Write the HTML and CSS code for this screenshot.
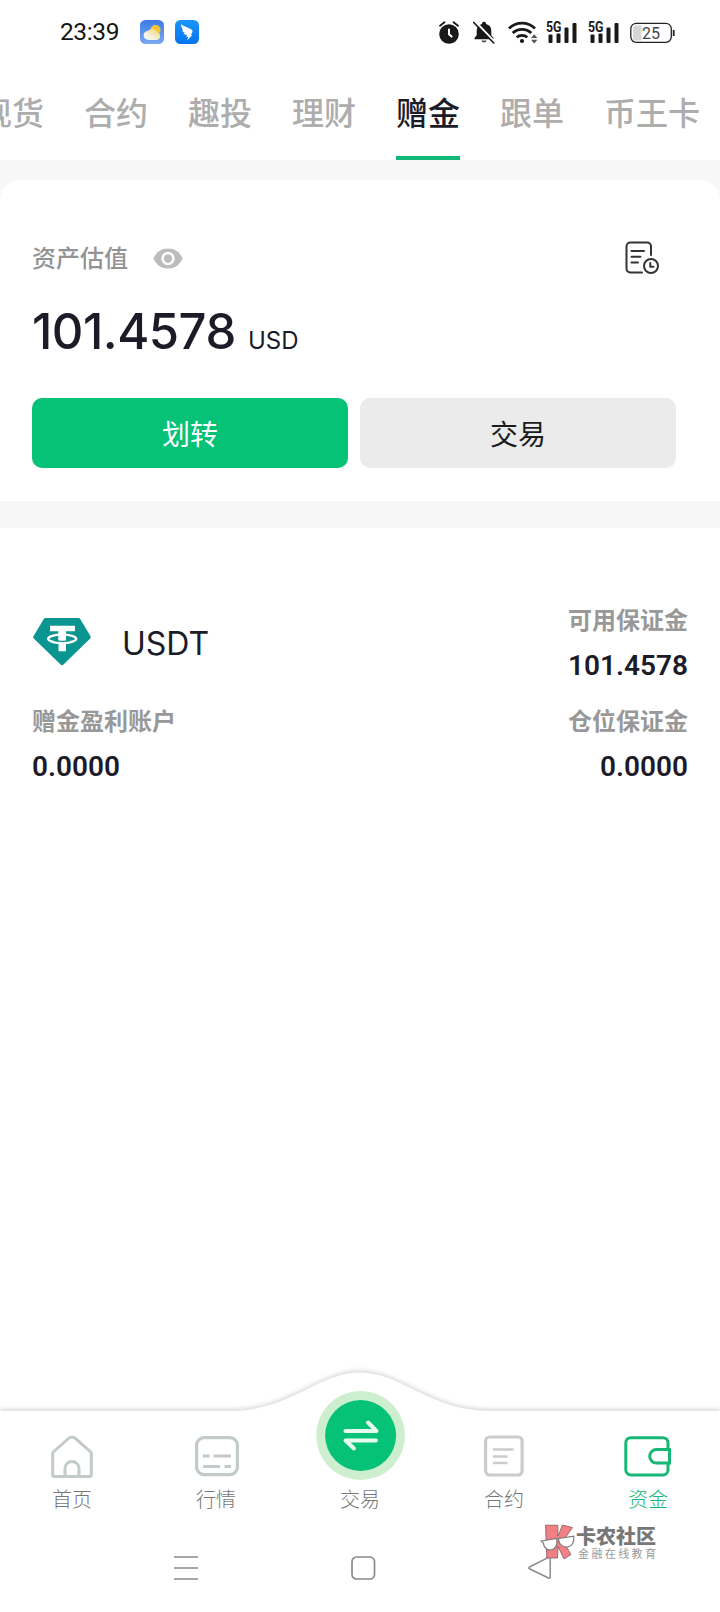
FILE: index.html
```html
<!DOCTYPE html>
<html lang="zh-CN">
<head>
<meta charset="utf-8">
<title>资金</title>
<link rel="stylesheet" href="styles.css">
</head>
<body>
<div class="screen">
  <header class="status">
    <span class="clock">23:39</span>
    <svg class="app-icon" viewBox="0 0 24 24">
      <defs><linearGradient id="sky" x1="0" y1="0" x2="0" y2="1"><stop offset="0" stop-color="#3d7be6"/><stop offset="1" stop-color="#7aa8f0"/></linearGradient>
      <linearGradient id="sun" x1="0" y1="1" x2="1" y2="0"><stop offset="0.3" stop-color="#f4f4ec"/><stop offset="1" stop-color="#f3d36a"/></linearGradient></defs>
      <rect width="24" height="24" rx="5.5" fill="url(#sky)"/>
      <circle cx="15.5" cy="10" r="5" fill="#fbc52d"/>
      <path d="M8.500 20a4.600 4.600 0 0 1-.6-9.200 6 6 0 0 1 9.600 1.500A4 4 0 0 1 17 20z" fill="url(#sun)"/>
    </svg>
    <svg class="app-icon second" viewBox="0 0 24 24">
      <defs><linearGradient id="blue" x1="0" y1="0" x2="0" y2="1"><stop offset="0" stop-color="#1b95f8"/><stop offset="1" stop-color="#0674ee"/></linearGradient></defs>
      <rect width="24" height="24" rx="5.500" fill="url(#blue)"/>
      <path d="M6 4.200c2.800 2.200 8 3.600 10.500 5.300 1.300 1 1.300 1.800.7 2.900l-1.400 2.600h1.600l-5.200 5.500 1-3.800h-2l.8-1.900c-2-.2-3-.9-3.500-1.900l1.800.1C8 11.900 7.200 10.900 7.100 9.700l1.500.5C6.900 8.500 5.900 6.600 6 4.200z" fill="#fff"/>
    </svg>
    <div class="status-right">
      <svg width="20" height="23" viewBox="0 0 20 23">
        <circle cx="10" cy="13" r="9.800" fill="#191919"/>
        <path d="M1 4.800 5.500 1.200M19 4.800 14.500 1.200" stroke="#191919" stroke-width="1.800" stroke-linecap="round"/>
        <path d="M10 8.500v4.800l2.600 2.300" fill="none" stroke="#fff" stroke-width="2" stroke-linecap="round"/>
      </svg>
      <svg class="bell" width="22" height="23" viewBox="0 0 22 23">
        <path d="M1.500 18.200v-1.300l2.200-2.700V9.500a7 7 0 0 1 5.200-6.600 2.100 2.100 0 0 1 4.200 0 7 7 0 0 1 5.200 6.600v4.700l2.200 2.700v1.300z" fill="#191919"/>
        <path d="M8.400 19.500h5.200a2.600 2 0 0 1-5.200 0z" fill="#555"/>
        <path d="M2.200.7 22 21.400" stroke="#fff" stroke-width="2.400"/>
        <path d="M.7 1.500 20.800 22" stroke="#191919" stroke-width="1.700" stroke-linecap="round"/>
      </svg>
      <svg class="wifi" width="30" height="23" viewBox="0 0 30 23">
        <g fill="none" stroke="#191919" stroke-width="2.700"><path d="M1 7.500a18.500 18.500 0 0 1 26 0"/><path d="M4.700 12a13.500 13.500 0 0 1 18.600 0"/><path d="M8.700 16.300a8 8 0 0 1 10.600 0"/></g>
        <circle cx="14" cy="20" r="2.100" fill="#191919"/>
        <path d="M23 17l3.200-3.800 3.200 3.800zM23 18.800l3.200 3.800 3.200-3.800z" fill="#555"/>
      </svg>
      <svg class="signal" width="32" height="23" viewBox="0 0 32 23">
        <text class="five-g" x="0" y="11" textLength="15.500" lengthAdjust="spacingAndGlyphs">5G</text>
        <g fill="#191919"><rect x="2.500" y="13.500" width="4" height="8.500" rx="1"/><rect x="10.500" y="12.500" width="4" height="9.500" rx="1"/><rect x="18.500" y="6.500" width="4" height="15.500" rx="1"/><rect x="26.500" y="2" width="4" height="20" rx="1"/></g>
      </svg>
      <svg class="signal" width="32" height="23" viewBox="0 0 32 23">
        <text class="five-g" x="0" y="11" textLength="15.500" lengthAdjust="spacingAndGlyphs">5G</text>
        <g fill="#191919"><rect x="2.500" y="13.500" width="4" height="8.500" rx="1"/><rect x="10.500" y="12.500" width="4" height="9.500" rx="1"/><rect x="18.500" y="6.500" width="4" height="15.500" rx="1"/><rect x="26.500" y="2" width="4" height="20" rx="1"/></g>
      </svg>
      <svg class="battery" width="45" height="23" viewBox="0 0 45 23">
        <rect x=".8" y="2.300" width="40.500" height="19" rx="5.500" fill="#fff" stroke="#222" stroke-width="1.300"/>
        <path d="M6 4.500h5.500v15H6a3 3 0 0 1-3-3v-9a3 3 0 0 1 3-3z" fill="#d6d6d6"/>
        <path d="M43.700 9v6" stroke="#222" stroke-width="1.800"/>
        <text class="charge" x="12" y="17.700" textLength="18" lengthAdjust="spacingAndGlyphs">25</text>
      </svg>
    </div>
  </header>

  <nav class="tabs">
    <a class="tab">现货</a><a class="tab">合约</a><a class="tab">趣投</a><a class="tab">理财</a><a class="tab active">赠金</a><a class="tab">跟单</a><a class="tab">币王卡</a>
  </nav>

  <main class="content">
    <section class="summary">
      <div class="summary-head">
        <span class="caption">资产估值</span>
        <svg class="eye" width="30" height="21" viewBox="0 0 30 21">
          <path d="M15 .5C23 .5 27.500 5.500 29.500 10.500 27.500 15.500 23 20.500 15 20.500S2.500 15.500.5 10.500C2.500 5.500 7 .5 15 .5z" fill="#bcbcbc"/>
          <circle cx="15" cy="10.500" r="5.400" fill="none" stroke="#fff" stroke-width="2.500"/>
        </svg>
        <svg class="history" width="35" height="34" viewBox="0 0 35 34">
          <g fill="none" stroke="#333" stroke-width="2" stroke-linecap="round" stroke-linejoin="round">
            <path d="M17 31.500H5.200A3.700 3.700 0 0 1 1.500 27.800V5.200A3.700 3.700 0 0 1 5.200 1.500h17.100A3.700 3.700 0 0 1 26 5.200V14"/>
            <path d="M6.500 10h12.500M6.500 15.700h9M6.500 21.400h6.500"/>
            <circle cx="26" cy="25" r="7"/>
            <path d="M25.300 22v3.800h3.200"/>
          </g>
        </svg>
      </div>
      <div class="total"><span class="amount">101.4578</span><span class="unit">USD</span></div>
      <div class="actions">
        <button class="btn primary">划转</button>
        <button class="btn">交易</button>
      </div>
    </section>

    <section class="asset">
      <div class="coin">
        <svg width="60" height="50" viewBox="0 0 60 50">
          <path d="M13.500 1h33a2 2 0 0 1 1.700 1L58.500 19.200a2 2 0 0 1-.3 2.400L31.500 47.500a2 2 0 0 1-2.900 0L1.800 21.600a2 2 0 0 1-.3-2.400L11.800 2a2 2 0 0 1 1.700-1z" fill="#0a9590"/>
          <path d="M18 8.800h25v5.500H34v20h-7.500v-20H18z" fill="#fff"/>
          <ellipse cx="30.200" cy="21.800" rx="14" ry="4.200" fill="none" stroke="#fff" stroke-width="2.400"/>
          <path d="M26.500 15h7.500v8h-7.500z" fill="#fff"/>
          <path d="M22 23.600q8 1.400 16.500 0" fill="none" stroke="#0a9590" stroke-width="1.300"/>
        </svg>
        <span class="coin-name">USDT</span>
      </div>
      <div class="cell right"><span class="label">可用保证金</span><span class="value">101.4578</span></div>
      <div class="cell"><span class="label">赠金盈利账户</span><span class="value">0.0000</span></div>
      <div class="cell right"><span class="label">仓位保证金</span><span class="value">0.0000</span></div>
    </section>
  </main>

  <footer class="bottom">
    <svg class="curve" width="720" height="252" viewBox="0 0 720 252">
      <path d="M-10 51H230C290 51 318 12.500 360 12.500S430 51 490 51H730V270H-10z" fill="#fff"/>
    </svg>
    <nav class="dock">
      <a class="dock-item">
        <svg width="48" height="48" viewBox="0 0 48 48"><g fill="none" stroke="#c3cbc6" stroke-width="3" stroke-linejoin="round"><path d="M4.700 20.500 20.500 6.500q3.500-3 7 0L43.300 20.500V42.500q0 2-2 2H6.700q-2 0-2-2z"/><path d="M17 44V36.500a7 7 0 0 1 14 0V44"/></g></svg>
        <span>首页</span>
      </a>
      <a class="dock-item">
        <svg width="48" height="48" viewBox="0 0 48 48"><g fill="none" stroke="#c3cbc6" stroke-width="3.200"><rect x="4.600" y="5.600" width="40.800" height="37" rx="7.500"/><path d="M11 24h6.500M21.500 24h17.500M11 34.500h17M32.500 34.500h6.500"/></g></svg>
        <span>行情</span>
      </a>
      <a class="dock-item center">
        <svg width="90" height="90" viewBox="0 0 90 90"><circle cx="45.600" cy="45.500" r="44.400" fill="#cdefcf"/><circle cx="45.600" cy="45.500" r="35.500" fill="#06c277"/><path d="M30.500 41H61.500L53 32.500M61 50.500H30.500L39 58.500" fill="none" stroke="#e8fbef" stroke-width="4" stroke-linecap="round" stroke-linejoin="round"/></svg>
        <span>交易</span>
      </a>
      <a class="dock-item">
        <svg width="48" height="48" viewBox="0 0 48 48"><g fill="none" stroke="#c9cdca" stroke-width="3.200"><rect x="5.600" y="5" width="36.500" height="38" rx="4"/><path d="M13 17.500h20.500M13 24.500h14.500M13 31h14.500" stroke-width="2.600"/></g></svg>
        <span>合约</span>
      </a>
      <a class="dock-item current">
        <svg width="48" height="48" viewBox="0 0 48 48"><g fill="none" stroke="#17b877" stroke-width="3"><path d="M44 18V10.700a5 5 0 0 0-5-5H6.800a5 5 0 0 0-5 5V38a5 5 0 0 0 5 5H39a5 5 0 0 0 5-5V31"/><path d="M45.500 17.500H32.500a6.800 6.800 0 0 0 0 13.600h13z"/></g></svg>
        <span>资金</span>
      </a>
    </nav>
    <div class="system">
      <svg width="26" height="26" viewBox="0 0 26 26"><path d="M1 2h24M1 13h24M1 24h24" stroke="#8b8b8b" stroke-width="1.700"/></svg>
      <svg width="26" height="26" viewBox="0 0 26 26"><rect x="2" y="2" width="22.500" height="22" rx="4.500" fill="none" stroke="#8b8b8b" stroke-width="1.700"/></svg>
      <svg width="26" height="26" viewBox="0 0 26 26"><path d="M2.500 12 21.500 2.400q1.700-.6 1.700 1V22q0 1.700-1.700 1L2.500 13.800q-1.300-.9 0-1.800z" fill="none" stroke="#8b8b8b" stroke-width="1.500"/></svg>
    </div>
    <div class="stamp">
      <svg width="35" height="36" viewBox="0 0 35 36">
        <g fill="#f07f86" stroke="#8a5a5c" stroke-width=".8"><path d="M5.500 1.200h12.300L18 12 22.500 1 32.500 3.600 23 17 31 30.500 24 35 18 22.500 17.500 34H6.800z"/></g>
        <g fill="#fff" stroke="#777" stroke-width="1.100"><path d="M1.200 17 16.600 14.500C18 22 14.500 26 10 26S3.500 22 3.500 19z"/><path d="M18.500 14.500 33.800 12.200C34.500 18 32 23 26.500 23S18.500 18.500 18.500 14.500z"/></g>
      </svg>
      <div class="stamp-text"><b class="stamp-title">卡农社区</b><span class="stamp-sub">金融在线教育</span></div>
    </div>
  </footer>
</div>
</body>
</html>
```
FILE: styles.css
```css
* { box-sizing: border-box; }
body {
  margin: 0;
  background: #fff;
  color: #1b1c28;
  font-family: "Noto Sans CJK SC", sans-serif;
}
svg { display: block; flex: none; }
.screen {
  width: 720px;
  height: 1612px;
  display: flex;
  flex-direction: column;
  overflow: hidden;
}

/* Status bar */
.status {
  height: 64px;
  display: flex;
  align-items: center;
  padding: 0 45px 0 60px;
}
.clock {
  width: 80px;
  font: 400 24.500px/66px Roboto, sans-serif;
  letter-spacing: -0.4px;
  color: #151515;
}
.app-icon { width: 24px; height: 24px; }
.app-icon.second { margin-left: 11px; }
.status-right { display: flex; margin-left: auto; align-items: center; }
.bell { margin-left: 14px; }
.wifi { margin-left: 13px; }
.signal { margin-left: 8px; }
.signal + .signal { margin-left: 10px; }
.battery { margin-left: 10px; }
.five-g { font: 700 14px Roboto, sans-serif; fill: #191919; }
.charge { font: 400 16px Roboto, sans-serif; fill: #444; }

/* Account tabs */
.tabs {
  height: 96px;
  display: flex;
  gap: 40px;
  margin-left: -20px;
}
.tab {
  flex: none;
  height: 96px;
  font-size: 32px;
  font-weight: 500;
  line-height: 94px;
  color: #adadad;
}
.tab.active { color: #1b1c28; border-bottom: 4px solid #13b977; }

/* Balance summary */
.content { flex: 1; min-height: 0; display: flex; flex-direction: column; background: #f7f7f7; padding-top: 20px; }
.summary {
  height: 321px;
  padding: 58px 44px 0 32px;
  background: #fff;
  border-radius: 20px 20px 0 0;
}
.summary-head { display: flex; align-items: center; height: 40px; }
.caption { height: 40px; font-size: 24px; font-weight: 500; line-height: 37px; color: #939393; width: 121px; }
.history { margin-left: auto; margin-right: 16px; }
.total {
  height: 120px;
  display: flex;
  align-items: baseline;
  font-family: Inter, sans-serif;
  line-height: 107px;
}
.amount { font-size: 49px; font-weight: 500; width: 216px; letter-spacing: -0.5px; }
.unit { font-size: 24px; }
.actions { display: flex; gap: 12px; }
.btn {
  flex: 1;
  height: 70px;
  padding: 0;
  border: 0;
  border-radius: 10px;
  background: #ebebeb;
  color: #1b1c20;
  font: 400 28px/68px "Noto Sans CJK SC", sans-serif;
}
.btn.primary { background: #06c277; color: #fff; }

/* Coin balances */
.asset {
  flex: 1;
  margin-top: 27px;
  padding: 72px 32px 0;
  background: #fff;
  display: grid;
  grid-template-columns: 1fr 1fr;
  grid-auto-rows: 101px;
  align-content: start;
}
.coin { display: flex; align-items: center; height: 84px; gap: 30px; }
.coin-name { font: 400 32px/84px Inter, sans-serif; padding-top: 3px; }
.cell { display: flex; flex-direction: column; }
.cell.right { align-items: flex-end; }
.label { font-size: 24px; font-weight: 700; line-height: 37px; color: #989898; }
.value { font: 600 28px/58px Roboto, sans-serif; }

/* Bottom dock */
.bottom { position: relative; height: 202px; background: #fff; }
.curve {
  position: absolute;
  left: 0;
  top: -50px;
  filter: drop-shadow(0 -2px 2px rgba(0, 0, 0, 0.15));
}
.dock { position: relative; display: flex; height: 130px; }
.dock-item {
  flex: 1;
  display: flex;
  flex-direction: column;
  align-items: center;
  padding-top: 22px;
  font-size: 20px;
  font-weight: 300;
  line-height: 37px;
  color: #777;
}
.dock-item.center { padding-top: 0; margin-top: -20px; }
.dock-item.current { color: #17b877; }
.system {
  position: relative;
  display: flex;
  align-items: center;
  justify-content: space-between;
  height: 56px;
  padding: 0 167px 0 173px;
}

/* Community stamp laid over the system bar */
.stamp { position: absolute; left: 540px; top: 114px; display: flex; gap: 1px; }
.stamp-text { display: flex; flex-direction: column; }
.stamp-title { font-size: 20px; font-weight: 900; line-height: 23px; color: #777; }
.stamp-sub { font-size: 11px; line-height: 13px; letter-spacing: 2.400px; color: #999; padding-left: 2px; }
```
